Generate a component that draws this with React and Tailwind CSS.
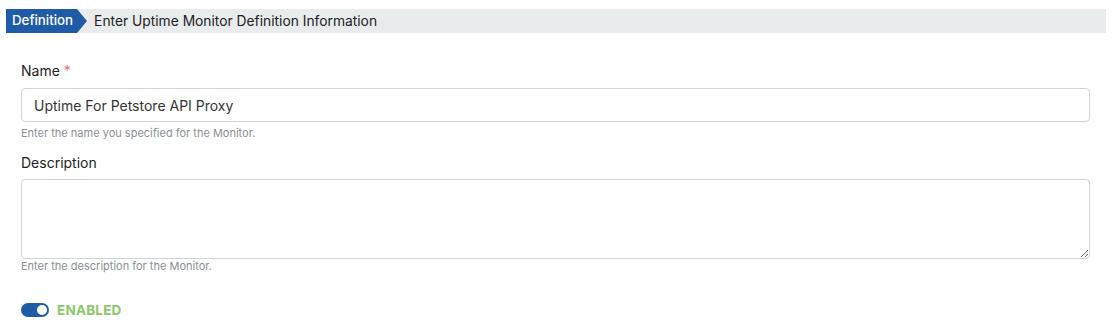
import React from "react";

export default function App() {
  return (
    <div className="w-[1117px] h-[331px] bg-white" style={{ fontFamily: "Inter, 'Liberation Sans', sans-serif" }}>
      <div className="pt-[9px] px-[6px] pr-[11px]">
        <div className="flex items-center h-[24px] bg-[#e9eced]">
          <div className="relative h-full flex items-center bg-[#1f5ba6] text-white text-[13.3px] font-medium pl-[6px] pr-[4px]">
            Definition
            <div className="absolute right-[-10px] top-0 w-0 h-0 border-t-[12px] border-b-[12px] border-l-[10px] border-t-transparent border-b-transparent border-l-[#1f5ba6]" />
          </div>
          <div className="ml-[17px] text-[13.8px] text-[#222]">Enter Uptime Monitor Definition Information</div>
        </div>
      </div>
      <div className="px-[21px] pr-[27px] pt-[28px]">
        <div className="text-[14px] text-[#222] leading-[20px]">
          Name <span className="text-[#e57373]">*</span>
        </div>
        <div className="mt-[7px] h-[34px] border border-[#ced4da] rounded-[4px] flex items-center px-[12px] text-[14px] text-[#333]">
          Uptime For Petstore API Proxy
        </div>
        <div className="mt-[4px] text-[11px] text-[#8a8f94] leading-[14px]">Enter the name you specified for the Monitor.</div>
        <div className="mt-[13px] text-[14px] text-[#222] leading-[20px]">Description</div>
        <textarea className="mt-[6px] block w-full h-[80px] border border-[#ced4da] rounded-[4px] outline-none" />
        <div className="mt-[0px] text-[11px] text-[#8a8f94] leading-[14px]">Enter the description for the Monitor.</div>
        <div className="mt-[27px] flex items-center gap-[8px]">
          <div className="w-[28px] h-[14px] rounded-full bg-[#1f5ba6] relative">
            <div className="absolute right-[2px] top-[2px] w-[10px] h-[10px] rounded-full bg-white" />
          </div>
          <span className="text-[13.5px] font-bold text-[#8cc66b] tracking-[0.2px]">ENABLED</span>
        </div>
      </div>
    </div>
  );
}
